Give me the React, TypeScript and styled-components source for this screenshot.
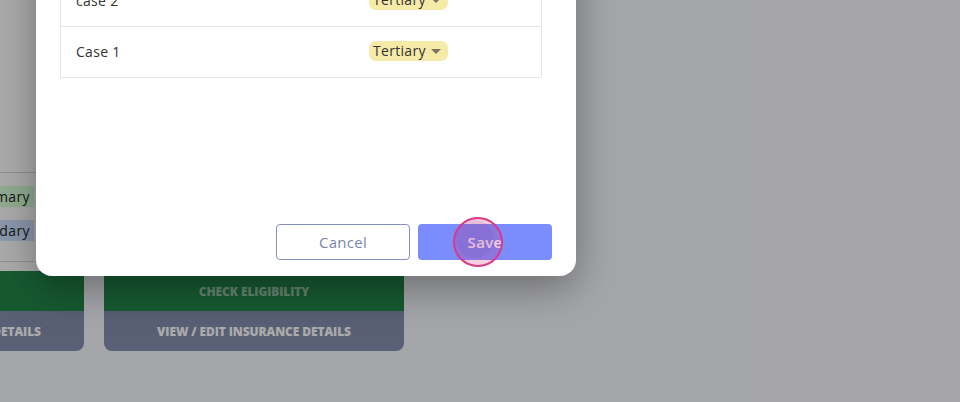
import React from "react";
import styled, { createGlobalStyle } from "styled-components";

const Global = createGlobalStyle`
  html, body { margin: 0; padding: 0; }
  body {
    width: 960px;
    height: 402px;
    overflow: hidden;
    background: #f7f8fd;
    font-family: "Open Sans", "Noto Sans", sans-serif;
  }
`;

const Page = styled.div`
  width: 960px;
  height: 402px;
  position: relative;
  overflow: hidden;
`;

const CardRow = styled.div`
  display: flex;
  gap: 20px;
  margin-left: -196px;
  align-items: flex-end;
  height: 351px;
`;

const Card = styled.div<{ $white?: boolean }>`
  width: 280px;
  display: flex;
  flex-direction: column;
  border-radius: 0 0 8px 8px;
  overflow: hidden;
  background: ${(p) => (p.$white ? "#ffffff" : "transparent")};
  height: ${(p) => (p.$white ? "351px" : "auto")};
  justify-content: flex-end;
`;

const WideCard = styled(Card)`
  width: 300px;
`;

const ChipTable = styled.div`
  border-top: 1px solid #d8d8d8;
  border-bottom: 1px solid #d8d8d8;
  padding: 13px 50px 20px 0;
  display: flex;
  flex-direction: column;
  align-items: flex-end;
  gap: 13px;
  margin-bottom: 9px;
`;

const StatusChip = styled.span<{ $tone: "green" | "blue" }>`
  display: inline-block;
  height: 21px;
  line-height: 21px;
  padding: 0 4px;
  font-size: 14px;
  letter-spacing: 0.4px;
  color: #222;
  background: ${(p) => (p.$tone === "green" ? "#d6ffd8" : "#cfe2ff")};
`;

const Band = styled.div<{ $tone: "green" | "slate" }>`
  height: 40px;
  display: flex;
  align-items: center;
  justify-content: center;
  font-size: 12px;
  font-weight: 800;
  letter-spacing: -0.1px;
  text-transform: uppercase;
  background: ${(p) => (p.$tone === "green" ? "#23874a" : "#858eae")};
  color: ${(p) => (p.$tone === "green" ? "rgba(255,255,255,0.55)" : "#ffffff")};
  white-space: nowrap;
`;

const Overlay = styled.div`
  position: absolute;
  inset: 0;
  background: rgba(0, 0, 0, 0.33);
`;

const Modal = styled.div`
  position: absolute;
  left: 36px;
  bottom: 126px;
  width: 540px;
  background: #ffffff;
  border-radius: 16px;
  box-shadow: 0 12px 40px rgba(0, 0, 0, 0.35);
  padding: 0 24px 16px 24px;
  box-sizing: border-box;
  display: flex;
  flex-direction: column;
`;

const Table = styled.div`
  border: 1px solid #e6e6e6;
  border-top: none;
  margin-right: 10px;
  display: flex;
  flex-direction: column;
`;

const Row = styled.div`
  display: grid;
  grid-template-columns: 293px 1fr;
  align-items: center;
  height: 50px;
  padding: 0 15px;
  border-top: 1px solid #e6e6e6;
  font-size: 14px;
  letter-spacing: 0.3px;
  color: #333;
  line-height: 1;
`;

const Tier = styled.span`
  display: inline-flex;
  align-items: center;
  gap: 5px;
  justify-self: start;
  height: 20px;
  margin-top: -2px;
  padding: 0 7px 0 4px;
  border-radius: 7px;
  background: #f6eaa8;
  color: #333;
  font-size: 14px;
`;

const Caret = styled.span`
  width: 0;
  height: 0;
  border-left: 5px solid transparent;
  border-right: 5px solid transparent;
  border-top: 5px solid #7b7460;
  margin-top: 1px;
`;

const Spacer = styled.div`
  height: 146px;
`;

const Footer = styled.div`
  display: flex;
  justify-content: flex-end;
  gap: 8px;
  position: relative;
`;

const Button = styled.button<{ $primary?: boolean }>`
  width: 134px;
  height: 36px;
  border-radius: 4px;
  font-family: "Open Sans", "Noto Sans", sans-serif;
  font-size: 15px;
  letter-spacing: 0.3px;
  font-weight: ${(p) => (p.$primary ? 600 : 500)};
  cursor: pointer;
  border: ${(p) => (p.$primary ? "none" : "1px solid #8690ba")};
  background: ${(p) => (p.$primary ? "#7b8cfc" : "#ffffff")};
  color: ${(p) => (p.$primary ? "#ffffff" : "#7b86ad")};
`;

const Touch = styled.div`
  position: absolute;
  left: 393px;
  top: -7px;
  width: 46px;
  height: 46px;
  border-radius: 50%;
  border: 2px solid #d93a86;
  background: rgba(205, 40, 114, 0.22);
  pointer-events: none;
  &::before {
    content: "";
    position: absolute;
    left: 1px;
    top: 1px;
    width: 38px;
    height: 38px;
    border-radius: 50%;
    background: rgba(110, 60, 170, 0.1);
  }
`;

export default function App() {
  return (
    <>
      <Global />
      <Page>
        <CardRow>
          <Card $white>
            <ChipTable>
              <StatusChip $tone="green">Primary</StatusChip>
              <StatusChip $tone="blue">Secondary</StatusChip>
            </ChipTable>
            <Band $tone="green">Check Eligibility</Band>
            <Band $tone="slate">View / Edit Insurance Details</Band>
          </Card>
          <WideCard>
            <Band $tone="green">Check Eligibility</Band>
            <Band $tone="slate">View / Edit Insurance Details</Band>
          </WideCard>
        </CardRow>
        <Overlay />
        <Modal>
          <Table>
            <Row>
              <span>case 3</span>
              <Tier>
                Tertiary
                <Caret />
              </Tier>
            </Row>
            <Row>
              <span>case 2</span>
              <Tier>
                Tertiary
                <Caret />
              </Tier>
            </Row>
            <Row>
              <span>Case 1</span>
              <Tier>
                Tertiary
                <Caret />
              </Tier>
            </Row>
          </Table>
          <Spacer />
          <Footer>
            <Button>Cancel</Button>
            <Button $primary>Save</Button>
            <Touch />
          </Footer>
        </Modal>
      </Page>
    </>
  );
}
